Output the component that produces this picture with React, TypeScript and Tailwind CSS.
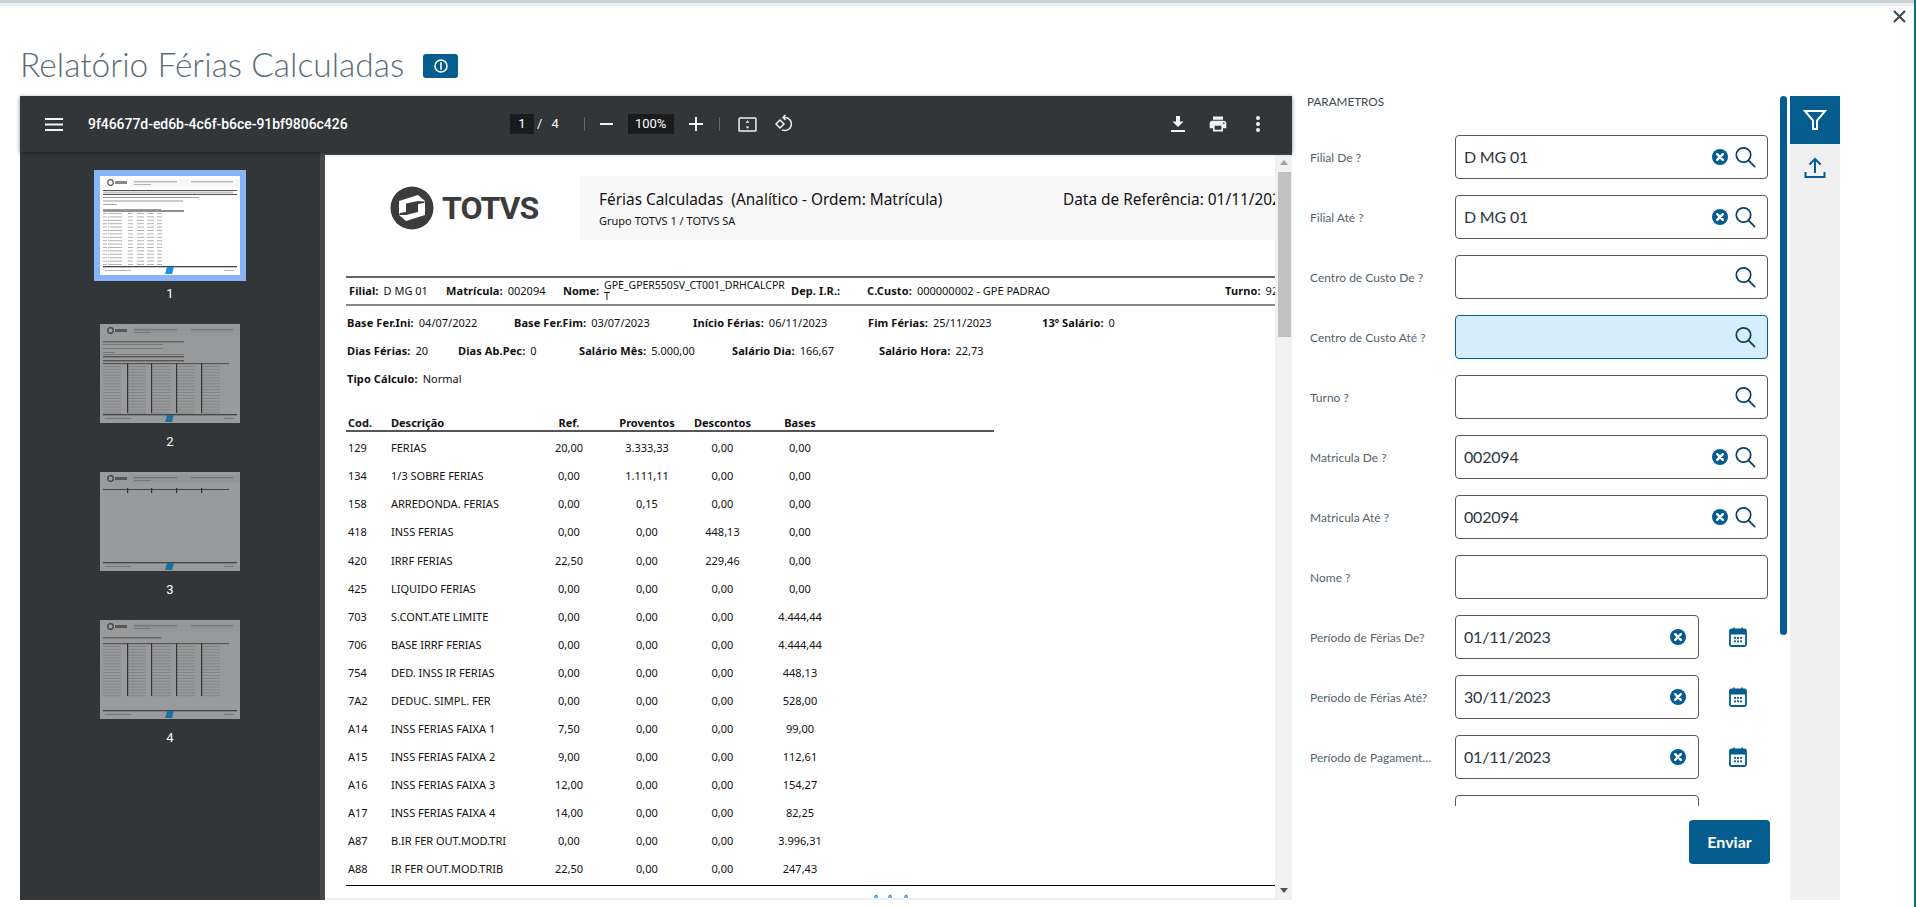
import { ReactNode } from 'react'

const RUBRICS = [
  ['129', 'FERIAS', '20,00', '3.333,33', '0,00', '0,00'],
  ['134', '1/3 SOBRE FERIAS', '0,00', '1.111,11', '0,00', '0,00'],
  ['158', 'ARREDONDA. FERIAS', '0,00', '0,15', '0,00', '0,00'],
  ['418', 'INSS FERIAS', '0,00', '0,00', '448,13', '0,00'],
  ['420', 'IRRF FERIAS', '22,50', '0,00', '229,46', '0,00'],
  ['425', 'LIQUIDO FERIAS', '0,00', '0,00', '0,00', '0,00'],
  ['703', 'S.CONT.ATE LIMITE', '0,00', '0,00', '0,00', '4.444,44'],
  ['706', 'BASE IRRF FERIAS', '0,00', '0,00', '0,00', '4.444,44'],
  ['754', 'DED. INSS IR FERIAS', '0,00', '0,00', '0,00', '448,13'],
  ['7A2', 'DEDUC. SIMPL. FER', '0,00', '0,00', '0,00', '528,00'],
  ['A14', 'INSS FERIAS FAIXA 1', '7,50', '0,00', '0,00', '99,00'],
  ['A15', 'INSS FERIAS FAIXA 2', '9,00', '0,00', '0,00', '112,61'],
  ['A16', 'INSS FERIAS FAIXA 3', '12,00', '0,00', '0,00', '154,27'],
  ['A17', 'INSS FERIAS FAIXA 4', '14,00', '0,00', '0,00', '82,25'],
  ['A87', 'B.IR FER OUT.MOD.TRI', '0,00', '0,00', '0,00', '3.996,31'],
  ['A88', 'IR FER OUT.MOD.TRIB', '22,50', '0,00', '0,00', '247,43'],
]

const PARAMS = [
  { label: 'Filial De ?', value: 'D MG 01', kind: 'search' },
  { label: 'Filial Até ?', value: 'D MG 01', kind: 'search' },
  { label: 'Centro de Custo De ?', value: '', kind: 'search' },
  { label: 'Centro de Custo Até ?', value: '', kind: 'search', focused: true },
  { label: 'Turno ?', value: '', kind: 'search' },
  { label: 'Matricula De ?', value: '002094', kind: 'search' },
  { label: 'Matricula Até ?', value: '002094', kind: 'search' },
  { label: 'Nome ?', value: '', kind: 'text' },
  { label: 'Período de Férias De?', value: '01/11/2023', kind: 'date' },
  { label: 'Período de Férias Até?', value: '30/11/2023', kind: 'date' },
  { label: 'Período de Pagamento De?', value: '01/11/2023', kind: 'date' },
  { label: 'Período de Pagamento Até?', value: '', kind: 'date' },
]

function SearchIcon() {
  return (
    <svg width="22" height="22" viewBox="0 0 22 22" fill="none" stroke="#0b3f5f" strokeWidth="1.7">
      <circle cx="9.5" cy="9" r="7.2" />
      <path d="M14.6 14.4 20.6 20.6" strokeLinecap="round" />
    </svg>
  )
}

function ClearIcon() {
  return (
    <svg width="16" height="16" viewBox="0 0 16 16">
      <circle cx="8" cy="8" r="8" fill="#045c8f" />
      <path d="M5.2 5.2 10.8 10.8M10.8 5.2 5.2 10.8" stroke="#fff" strokeWidth="2.4" strokeLinecap="round" />
    </svg>
  )
}

function CalendarIcon() {
  return (
    <svg width="18" height="20" viewBox="0 0 18 20" fill="none">
      <rect x="1" y="2.5" width="16" height="16.5" rx="1.5" stroke="#045c8f" strokeWidth="1.8" />
      <rect x="1" y="3" width="16" height="4.5" fill="#045c8f" />
      <path d="M5 0.5v3M13 0.5v3" stroke="#045c8f" strokeWidth="1.6" />
      <path
        d="M5 10h2v1.8H5zM8 10h2v1.8H8zM11 10h2v1.8h-2zM5 13.5h2v1.8H5zM8 13.5h2v1.8H8zM11 13.5h2v1.8h-2z"
        fill="#045c8f"
      />
    </svg>
  )
}

function Thumb({ page }: { page: number }) {
  const first = page === 1
  const dark = first ? '#555' : '#3a3a3a'
  const soft = first ? '#b5b5b5' : '#747576'
  const rows = page === 1 ? 16 : 0
  const grid = page === 2 || page === 4
  const gridTop = page === 2 ? 39 : 23
  const gridRows = page === 2 ? 17 : 18
  return (
    <svg width="140" height="99" viewBox="0 0 140 99" className="block">
      <rect width="140" height="99" fill={first ? '#fff' : '#999a9b'} />
      <rect x="31" y="3" width="109" height="8" fill={first ? '#f6f6f6' : '#949596'} />
      <circle cx="10.5" cy="6.5" r="2.8" fill="none" stroke={dark} strokeWidth="1.2" />
      <rect x="15" y="5" width="12" height="3" fill={dark} opacity="0.7" />
      <rect x="34" y="5" width="43" height="1.4" fill={soft} />
      <rect x="34" y="8" width="17" height="1" fill={soft} />
      <rect x="91" y="5" width="42" height="1.4" fill={soft} />
      {first && (
        <g>
          <rect x="3" y="14" width="134" height="1" fill={dark} />
          <rect x="3" y="15.5" width="130" height="2" fill="#c4c4c4" />
          <rect x="3" y="18" width="134" height="1" fill={dark} />
          <rect x="3" y="21" width="96" height="1" fill="#999" />
          <rect x="3" y="24.5" width="80" height="1" fill="#999" />
          <rect x="3" y="28" width="14" height="1" fill="#aaa" />
          <rect x="3" y="33" width="58" height="1" fill="#999" />
          <rect x="3" y="34.5" width="81" height="1" fill="#222" />
        </g>
      )}
      {Array.from({ length: rows }).map((_, i) => (
        <g key={i} fill="#b2b2b2">
          <rect x="3" y={37 + i * 3.4} width="4" height="1" />
          <rect x="8" y={37 + i * 3.4} width="14" height="1" />
          <rect x="28" y={37 + i * 3.4} width="5" height="1" />
          <rect x="37" y={37 + i * 3.4} width="7" height="1" />
          <rect x="47" y={37 + i * 3.4} width="7" height="1" />
          <rect x="57" y={37 + i * 3.4} width="5" height="1" />
        </g>
      ))}
      {page === 2 && (
        <g fill="#555">
          <rect x="3" y="17" width="81" height="1.6" opacity="0.7" />
          <rect x="3" y="20" width="60" height="1" opacity="0.5" />
          <rect x="3" y="24" width="60" height="1" opacity="0.5" />
          <rect x="3" y="28" width="12" height="1" opacity="0.5" />
          <rect x="3" y="30" width="81" height="1" opacity="0.5" />
          <rect x="3" y="32" width="81" height="1.4" />
          <rect x="3" y="36" width="81" height="1.4" />
        </g>
      )}
      {page === 3 && <rect x="3" y="17" width="126" height="1" fill="#444" />}
      {page === 3 &&
        [27, 51, 76, 101].map(x => <rect key={x} x={x} y="16" width="1.2" height="5" fill="#333" />)}
      {page === 4 && <rect x="3" y="17" width="58" height="1.5" fill="#666" />}
      {grid && <rect x="3" y={gridTop} width="126" height="1.2" fill="#555" />}
      {grid &&
        Array.from({ length: gridRows }).map((_, i) => (
          <g key={i} fill="#818283">
            {[3, 28, 53, 77, 102].map(x => (
              <rect key={x} x={x} y={gridTop + 3 + i * 2.9} width="18" height="0.9" />
            ))}
          </g>
        ))}
      {grid &&
        [27, 51, 76, 101].map(x => (
          <rect key={x} x={x} y={gridTop} width="1.2" height={page === 2 ? 50 : 53} fill="#333" />
        ))}
      <rect x="3" y="90" width="134" height="1.3" fill="#444" />
      <rect x="5" y="94" width="26" height="1" fill={soft} />
      <rect x="124" y="94" width="10" height="1" fill={soft} />
      <path d="M67 91h7l-2 7h-7z" fill={first ? '#1b8fe0' : '#1d6f9f'} />
    </svg>
  )
}

function TotvsMark() {
  return (
    <svg width="44" height="44" viewBox="0 0 44 44">
      <circle cx="22" cy="22" r="21.5" fill="#3c3c3c" />
      <path d="M9 15 28 9l7 6v14l-19 6-7-6z" fill="#fff" />
      <path d="M16 17.5 28 15v11l-12 3z" fill="#3c3c3c" />
      <path d="M28 15l7 0.5-1 1.5-6 1zM16 29l-7 0 1-2 6-1z" fill="#3c3c3c" />
    </svg>
  )
}

function Field({ w, label, children }: { w: string; label: string; children?: ReactNode }) {
  return (
    <div className={`flex shrink-0 items-center gap-[5px] whitespace-nowrap ${w}`}>
      <b className="font-bold tracking-[0.1px]">{label}</b>
      <span>{children}</span>
    </div>
  )
}

function ToolButton({ className, children }: { className?: string; children: ReactNode }) {
  return <div className={`flex shrink-0 items-center justify-center ${className ?? ''}`}>{children}</div>
}

function Toolbar() {
  return (
    <div className="relative z-10 flex h-14 shrink-0 items-center bg-[#323639] pl-[25px] pr-[22px] text-white font-['Roboto',sans-serif] shadow-[0_1px_4px_rgba(0,0,0,0.45)]">
      <svg width="18" height="13" viewBox="0 0 18 13" fill="#f1f3f4" className="shrink-0">
        <path d="M0 0h18v2H0zM0 5.5h18v2H0zM0 11h18v2H0z" />
      </svg>
      <div className="ml-[25px] w-[422px] shrink-0 text-[14px] font-medium tracking-[-0.05px]">9f46677d-ed6b-4c6f-b6ce-91bf9806c426</div>
      <div className="flex h-5 w-6 shrink-0 items-center justify-center bg-[#191b1c] text-[13px]">1</div>
      <span className="ml-[3px] text-[13px]">/</span>
      <span className="ml-[9px] text-[13px]">4</span>
      <div className="ml-[25px] h-[14px] w-px shrink-0 bg-[#6a6d70]" />
      <div className="ml-[15px] h-[2px] w-[13px] shrink-0 bg-[#f1f3f4]" />
      <div className="ml-[15px] flex h-5 w-[46px] shrink-0 items-center justify-center bg-[#191b1c] text-[13px]">100%</div>
      <svg width="14" height="14" viewBox="0 0 14 14" fill="#f1f3f4" className="ml-[15px] shrink-0">
        <path d="M6 0h2v6h6v2H8v6H6V8H0V6h6z" />
      </svg>
      <div className="ml-[16px] h-[14px] w-px shrink-0 bg-[#6a6d70]" />
      <ToolButton className="ml-[18px] w-5">
        <svg width="19" height="15" viewBox="0 0 20 16" fill="none">
          <rect x="1" y="1" width="18" height="14" rx="1" stroke="#f1f3f4" strokeWidth="1.6" />
          <path d="M10 3.5 12 6H8zM10 12.5 8 10h4z" fill="#f1f3f4" />
        </svg>
      </ToolButton>
      <ToolButton className="ml-[15px] w-[22px]">
        <svg width="20" height="20" viewBox="0 0 20 20" fill="none" stroke="#f1f3f4" strokeWidth="1.5">
          <path d="M6 6 10 10 6 14 2 10z" />
          <path d="M9.5 3.5h1.5a6.5 6.5 0 1 1-3 12.3" />
          <path d="M11.5 1 9 3.5 11.5 6" />
        </svg>
      </ToolButton>
      <div className="ml-auto flex items-center gap-4">
        <svg width="24" height="24" viewBox="0 0 24 24" fill="#f1f3f4">
          <path d="M17.5 9.5H14V4h-4v5.5H6.5L12 15zM5 18v2h14v-2z" />
        </svg>
        <div className="flex w-6 justify-center">
          <svg width="20" height="20" viewBox="0 0 24 24" fill="#f1f3f4">
            <path d="M19 8H5c-1.66 0-3 1.34-3 3v6h4v4h12v-4h4v-6c0-1.66-1.34-3-3-3zm-3 11H8v-5h8v5zm3-7c-.55 0-1-.45-1-1s.45-1 1-1 1 .45 1 1-.45 1-1 1zm-1-9H6v4h12V3z" />
          </svg>
        </div>
        <svg width="24" height="24" viewBox="0 0 24 24" fill="#f1f3f4">
          <circle cx="12" cy="6" r="2" />
          <circle cx="12" cy="12" r="2" />
          <circle cx="12" cy="18" r="2" />
        </svg>
      </div>
    </div>
  )
}

function PdfPage() {
  return (
    <div className="h-[743px] w-[950px] shrink-0 overflow-hidden bg-white pl-[21px] text-[11px] text-[#111] font-['Noto_Sans',sans-serif]">
      {/* Cabecalho */}
      <div className="mt-[21px] flex h-16 w-[929px]">
        <div className="flex w-[234px] shrink-0 items-center pl-[44px]">
          <TotvsMark />
          <span className="ml-[8px] text-[32px] font-bold leading-none tracking-[-1px] text-[#3c3c3c] font-['Roboto',sans-serif]">
            TOTVS
          </span>
        </div>
        <div className="relative flex-1 overflow-hidden bg-[#f8f8f8] pl-[19px] pt-[13px] text-[#111]">
          <div className="flex whitespace-nowrap text-[15.4px] leading-[22px]">
            <span className="w-[464px] shrink-0">Férias Calculadas&nbsp;&nbsp;(Analítico - Ordem: Matrícula)</span>
            <span>Data de Referência: 01/11/2023</span>
          </div>
          <div className="mt-[3px] text-[11px] leading-[14px]">Grupo TOTVS 1 / TOTVS SA</div>
        </div>
      </div>

      <div className="mt-[36px] flex h-[30px] w-[929px] items-center overflow-hidden border-y-2 border-b-[#888] border-t-[#666] pl-[3px] whitespace-nowrap">
        <Field w="w-[97px]" label="Filial:">D MG 01</Field>
        <Field w="w-[117px]" label="Matrícula:">002094</Field>
        <div className="flex w-[228px] shrink-0 items-center">
          <b className="w-[41px] shrink-0 font-bold">Nome:</b>
          <span className="w-[180px] text-[10.5px] leading-[11px]">
            GPE_GPER550SV_CT001_DRHCALCPR
            <br />T
          </span>
        </div>
        <Field w="w-[76px]" label="Dep. I.R.:" />
        <Field w="w-[358px]" label="C.Custo:">000000002 - GPE PADRAO</Field>
        <Field w="w-[60px]" label="Turno:">92</Field>
      </div>

      <div className="mt-[4px] flex h-[27px] items-center pl-px">
        <Field w="w-[167px]" label="Base Fer.Ini:">04/07/2022</Field>
        <Field w="w-[179px]" label="Base Fer.Fim:">03/07/2023</Field>
        <Field w="w-[175px]" label="Início Férias:">06/11/2023</Field>
        <Field w="w-[174px]" label="Fim Férias:">25/11/2023</Field>
        <Field w="w-[100px]" label="13º Salário:">0</Field>
      </div>
      <div className="flex h-7 items-center pl-px">
        <Field w="w-[111px]" label="Dias Férias:">20</Field>
        <Field w="w-[121px]" label="Dias Ab.Pec:">0</Field>
        <Field w="w-[153px]" label="Salário Mês:">5.000,00</Field>
        <Field w="w-[147px]" label="Salário Dia:">166,67</Field>
        <Field w="w-[130px]" label="Salário Hora:">22,73</Field>
      </div>
      <div className="flex h-7 items-center pl-px">
        <Field w="w-[140px]" label="Tipo Cálculo:">Normal</Field>
      </div>

      {/* Verbas */}
      <div className="mt-[22px] grid h-[17px] w-[648px] grid-cols-[43px_137px_82px_74px_77px_78px] items-center border-b-2 border-[#555] pl-[2px] pb-px font-bold">
        <span>Cod.</span>
        <span>Descrição</span>
        <span className="text-center">Ref.</span>
        <span className="text-center">Proventos</span>
        <span className="text-center">Descontos</span>
        <span className="text-center">Bases</span>
      </div>
      <div className="mt-[2px]">
        {RUBRICS.map((row, i) => (
          <div
            key={row[0]}
            className={`grid w-[648px] grid-cols-[43px_137px_82px_74px_77px_78px] items-center pl-[2px] ${i === 3 ? 'h-[29px]' : 'h-7'}`}
          >
            <span>{row[0]}</span>
            <span className="whitespace-nowrap">{row[1]}</span>
            <span className="text-center">{row[2]}</span>
            <span className="text-center">{row[3]}</span>
            <span className="text-center">{row[4]}</span>
            <span className="text-center">{row[5]}</span>
          </div>
        ))}
      </div>
      <div className="mt-[2px] h-px w-[929px] bg-black" />
      <svg width="40" height="12" viewBox="0 0 40 12" className="ml-[526px] mt-[6px]" fill="none" stroke="#1b8fd6" strokeWidth="1.3">
        <path d="M2 10c1-9 4-9 3 0M16 10c1-9 4-9 3 0M32 10c1-9 4-9 3 0" />
      </svg>
    </div>
  )
}

function Viewer() {
  return (
    <div className="flex w-[1272px] shrink-0 flex-col">
      <Toolbar />
      <div className="flex h-[748px] bg-[#45494c]">
        <div className="flex w-[300px] shrink-0 flex-col items-center gap-[22px] bg-[#323639] pt-6 text-[13px] text-white font-['Roboto',sans-serif]">
          {[1, 2, 3, 4].map(page => (
            <div key={page} className="flex flex-col items-center">
              <div className={page === 1 ? 'outline-[6px] outline-solid outline-[#8ab4f8]' : ''}>
                <Thumb page={page} />
              </div>
              <div className="mt-[11px] h-4 leading-4">{page}</div>
            </div>
          ))}
        </div>
        <div className="ml-[5px] flex flex-1 flex-col pt-[3px]">
          <div className="flex">
            <PdfPage />
            <div className="flex h-[743px] flex-1 flex-col items-center bg-[#f1f1f1] pl-px">
              <div className="mt-[5px] h-0 w-0 border-x-[4px] border-b-[5px] border-x-transparent border-b-[#a3a3a3]" />
              <div className="mt-[7px] h-[165px] w-[13px] bg-[#c1c1c1]" />
              <div className="mt-auto mb-[5px] h-0 w-0 border-x-[4px] border-t-[5px] border-x-transparent border-t-[#505050]" />
            </div>
          </div>
          <div className="h-[2px] bg-[#f0f0f0]" />
        </div>
      </div>
    </div>
  )
}

function ParamRow({ label, value, kind, focused }: { label: string; value: string; kind: string; focused?: boolean }) {
  const isDate = kind === 'date'
  return (
    <div className="flex h-11 shrink-0 items-center pl-[18px]">
      <label className="mr-[21px] w-[124px] shrink-0 truncate pt-[2px] text-[12px] leading-5 text-[#56636b]">{label}</label>
      <div
        className={`flex h-11 items-center rounded-[4px] border pl-2 ${isDate ? 'w-[244px] pr-[12px]' : 'w-[313px] pr-[11px]'} ${focused ? 'border-[#045c8f] bg-[#d6eefc]' : 'border-[#58585a] bg-white'}`}
      >
        <span className="flex-1 text-[16px] tracking-[-0.2px] text-[#2c3740]">{value}</span>
        {value !== '' && <ClearIcon />}
        {kind === 'search' && (
          <span className="ml-[6px]">
            <SearchIcon />
          </span>
        )}
      </div>
      {isDate && (
        <span className="ml-[30px]">
          <CalendarIcon />
        </span>
      )}
    </div>
  )
}

function ParamsPanel() {
  return (
    <div className="flex w-[488px] shrink-0 flex-col font-['Lato',sans-serif]">
      <div className="h-[39px] pl-[15px] text-[11.7px] leading-[10px] text-[#3d4850]">PARAMETROS</div>
      <div className="flex h-[671px] flex-col gap-4 overflow-hidden">
        {PARAMS.map(p => (
          <ParamRow key={p.label} {...p} />
        ))}
      </div>
      <button className="mr-[10px] mt-[14px] h-11 w-[81px] self-end rounded-[4px] bg-[#045c8f] text-[16px] font-bold text-white">
        Enviar
      </button>
    </div>
  )
}

function SideTabs() {
  return (
    <div className="ml-[3px] w-[50px] shrink-0 bg-[#f0f0f0]">
      <div className="flex h-12 items-center justify-center bg-[#045c8f]">
        <svg width="24" height="22" viewBox="0 0 24 22" fill="none" stroke="#fff" strokeWidth="2">
          <path d="M2 2h20l-8 9.5V20h-4v-8.500z" />
        </svg>
      </div>
      <div className="flex h-12 items-center justify-center">
        <svg width="22" height="22" viewBox="0 0 22 22" fill="none" stroke="#045c8f" strokeWidth="2">
          <path d="M11 16V2.5M5.5 7.500 11 2l5.500 5.500M1.500 15v5h19v-5" />
        </svg>
      </div>
    </div>
  )
}

export default function App() {
  return (
    <div className="relative flex h-[907px] w-full overflow-hidden bg-white font-['Lato',sans-serif]">
      <div className="flex min-w-0 flex-1 flex-col">
        <div className="h-[3px] shrink-0 bg-[#c9d2d6]" />
        <div className="h-[3px] shrink-0 bg-[#eeeeee]" />
        <div className="flex h-[90px] shrink-0 items-center pl-[20px] pt-7">
          <h1 className="text-[33.5px] font-light leading-none text-[#5b6d78]">Relatório Férias Calculadas</h1>
          <div className="ml-[19px] mt-[2px] flex h-6 w-[35px] items-center justify-center rounded-[3px] bg-[#045c8f]">
            <svg width="14" height="14" viewBox="0 0 14 14" fill="none">
              <circle cx="7" cy="7" r="6" stroke="#fff" strokeWidth="1.6" />
              <rect x="6.2" y="3.2" width="1.6" height="7.6" fill="#fff" />
            </svg>
          </div>
        </div>
        <div className="flex h-[804px] shrink-0 pl-[20px]">
          <Viewer />
          <ParamsPanel />
          <div className="h-[539px] w-[7px] shrink-0 rounded-full bg-[#045c8f]" />
          <SideTabs />
        </div>
      </div>
      <div className="w-[2px] shrink-0 bg-[#0d6e7c]" />
      <button className="absolute right-[10px] top-[10px] text-[#3f4a52]" aria-label="Fechar">
        <svg width="13" height="13" viewBox="0 0 13 13" stroke="currentColor" strokeWidth="2.2">
          <path d="M1 1 12 12M12 1 1 12" />
        </svg>
      </button>
    </div>
  )
}
